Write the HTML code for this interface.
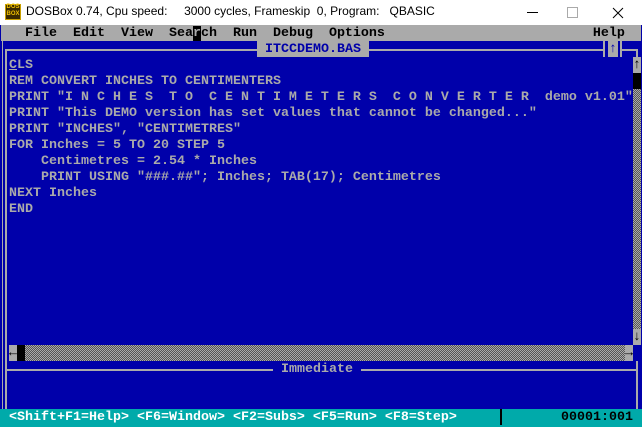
<!DOCTYPE html>
<html><head><meta charset="utf-8"><style>
*{margin:0;padding:0;box-sizing:border-box}
body{width:642px;height:427px;background:#fff;position:relative;overflow:hidden;font-family:"Liberation Mono",monospace}
.a{position:absolute}
.t{position:absolute;font-size:13.33px;line-height:16px;white-space:pre;color:#aaa;font-weight:bold;padding-top:1px}
.t u{text-decoration:underline}
.dot{background-color:#aaa;background-image:repeating-conic-gradient(#555 0 25%,transparent 0 50%);background-size:2px 2px}
</style></head><body>
<!-- title bar -->
<div class="a" style="left:5px;top:4px;width:16px;height:16px;background:#3a2a00;border:1px solid #c8a000"></div>
<div class="a" style="left:6px;top:4px;font:bold 6px 'Liberation Sans',sans-serif;color:#f0c000;line-height:7px;text-align:center;width:14px">DOS<br>BOX</div>
<div class="a" style="left:26px;top:4px;font:12px 'Liberation Sans',sans-serif;color:#000;white-space:pre">DOSBox 0.74, Cpu speed:     3000 cycles, Frameskip  0, Program:   QBASIC</div>
<div class="a" style="left:527px;top:12px;width:11px;height:1px;background:#000"></div>
<div class="a" style="left:567px;top:7px;width:11px;height:11px;border:1px solid #aaa"></div>
<svg class="a" style="left:612px;top:7px" width="12" height="12"><path d="M1 1L11 11M11 1L1 11" stroke="#000" stroke-width="1"/></svg>
<!-- screen -->
<div class="a" style="left:0px;top:25px;width:642px;height:402px;background:#0000aa"></div>
<div class="a" style="left:2px;top:41px;width:1px;height:368px;background:#aaa"></div>
<div class="a" style="left:1px;top:25px;width:640px;height:16px;background:#aaa"></div>
<div class="a" style="left:193px;top:26px;width:8px;height:15px;background:#000"></div>
<div class="t" style="left:1px;top:25px;color:#000">   File  Edit  View  Sea<span style="color:#aaa">r</span>ch  Run  Debug  Options                          Help</div>
<!-- row1 frame -->
<div class="a" style="left:5px;top:49px;width:599px;height:2px;background:#aaa"></div>
<div class="a" style="left:5px;top:49px;width:2px;height:360px;background:#aaa"></div>
<div class="a" style="left:257px;top:41px;width:112px;height:16px;background:#aaa"></div>
<div class="t" style="left:257px;top:41px;color:#0000aa"> ITCCDEMO.BAS </div>
<div class="a" style="left:603px;top:41px;width:2px;height:16px;background:#aaa"></div>
<div class="a" style="left:608px;top:41px;width:10px;height:16px;background:#aaa"></div>
<div class="t" style="left:609px;top:41px;color:#0000aa">↑</div>
<div class="a" style="left:620px;top:41px;width:2px;height:16px;background:#aaa"></div>
<div class="a" style="left:620px;top:49px;width:18px;height:2px;background:#aaa"></div>
<div class="a" style="left:636px;top:49px;width:2px;height:8px;background:#aaa"></div>
<!-- code -->
<div class="t" style="left:9px;top:57px"><u>C</u>LS
REM CONVERT INCHES TO CENTIMENTERS
PRINT "I N C H E S  T O  C E N T I M E T E R S  C O N V E R T E R  demo v1.01"
PRINT "This DEMO version has set values that cannot be changed..."
PRINT "INCHES", "CENTIMETRES"
FOR Inches = 5 TO 20 STEP 5
    Centimetres = 2.54 * Inches
    PRINT USING "###.##"; Inches; TAB(17); Centimetres
NEXT Inches
END</div>
<!-- vertical scrollbar -->
<div class="a dot" style="left:633px;top:57px;width:8px;height:288px"></div>
<div class="a" style="left:633px;top:57px;width:8px;height:16px;background:#aaa"></div>
<div class="t" style="left:633px;top:57px;color:#000">↑</div>
<div class="a" style="left:633px;top:73px;width:8px;height:16px;background:#000"></div>
<div class="a" style="left:633px;top:329px;width:8px;height:16px;background:#aaa"></div>
<div class="t" style="left:633px;top:329px;color:#000">↓</div>
<!-- horizontal scrollbar -->
<div class="a dot" style="left:9px;top:345px;width:624px;height:16px"></div>
<div class="a" style="left:9px;top:345px;width:8px;height:16px;background:#aaa"></div>
<div class="t" style="left:9px;top:345px;color:#000">←</div>
<div class="a" style="left:17px;top:345px;width:8px;height:16px;background:#000"></div>
<div class="a" style="left:625px;top:345px;width:8px;height:16px;background:#aaa"></div>
<div class="t" style="left:625px;top:345px;color:#000">→</div>
<!-- immediate -->
<div class="a" style="left:5px;top:369px;width:633px;height:2px;background:#aaa"></div>
<div class="a" style="left:273px;top:361px;width:88px;height:16px;background:#0000aa"></div>
<div class="t" style="left:273px;top:361px"> Immediate </div>
<div class="a" style="left:636px;top:361px;width:2px;height:48px;background:#aaa"></div>
<!-- status -->
<div class="a" style="left:0px;top:409px;width:642px;height:18px;background:#00aaaa"></div>
<div class="t" style="left:9px;top:409px;color:#fff">&lt;Shift+F1=Help&gt; &lt;F6=Window&gt; &lt;F2=Subs&gt; &lt;F5=Run&gt; &lt;F8=Step&gt;</div>
<div class="a" style="left:500px;top:409px;width:2px;height:16px;background:#000"></div>
<div class="t" style="left:561px;top:409px;color:#000">00001:001</div>
</body></html>
